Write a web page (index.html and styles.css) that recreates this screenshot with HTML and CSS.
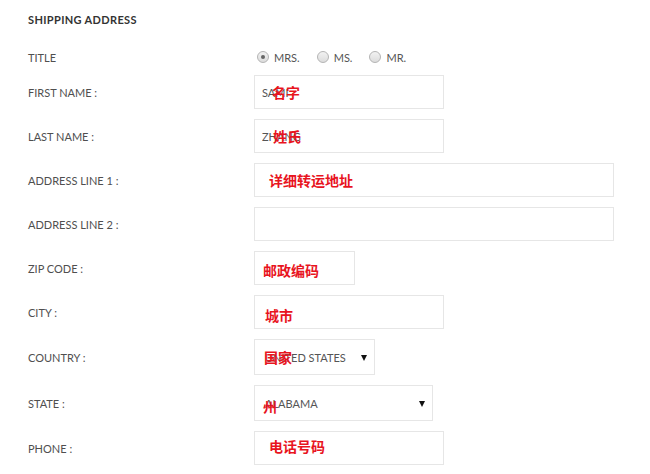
FILE: index.html
```html
<!DOCTYPE html>
<html lang="en">

<head>
  <meta charset="UTF-8">
  <title>Shipping Address</title>
  <link rel="stylesheet" href="styles.css">
</head>

<body>
  <form class="address">
    <h2>Shipping Address</h2>

    <div class="row row-title">
      <span class="label">Title</span>
      <div class="radios">
        <label><input type="radio" name="title" checked> Mrs.</label>
        <label><input type="radio" name="title"> Ms.</label>
        <label><input type="radio" name="title"> Mr.</label>
      </div>
    </div>

    <div class="row">
      <label class="label" for="first">First name :</label>
      <div class="field">
        <input class="box w-md" id="first" value="SAMI">
        <span class="note" style="left: 18px">名字</span>
      </div>
    </div>

    <div class="row">
      <label class="label" for="last">Last name :</label>
      <div class="field">
        <input class="box w-md" id="last" value="ZHANG">
        <span class="note" style="left: 19px">姓氏</span>
      </div>
    </div>

    <div class="row">
      <label class="label" for="addr1">Address line 1 :</label>
      <div class="field">
        <input class="box w-lg" id="addr1">
        <span class="note" style="left: 15px">详细转运地址</span>
      </div>
    </div>

    <div class="row">
      <label class="label" for="addr2">Address line 2 :</label>
      <div class="field">
        <input class="box w-lg" id="addr2">
      </div>
    </div>

    <div class="row">
      <label class="label" for="zip">Zip code :</label>
      <div class="field">
        <input class="box w-sm" id="zip">
        <span class="note" style="left: 9px; top: 19px">邮政编码</span>
      </div>
    </div>

    <div class="row">
      <label class="label" for="city">City :</label>
      <div class="field">
        <input class="box w-md" id="city">
        <span class="note" style="left: 11px; top: 20px">城市</span>
      </div>
    </div>

    <div class="row">
      <label class="label" for="country">Country :</label>
      <div class="field select-wrap w-country">
        <select class="box" id="country">
          <option>UNITED STATES</option>
        </select>
        <span class="note" style="left: 10px; top: 18px">国家</span>
      </div>
    </div>

    <div class="row">
      <label class="label" for="state">State :</label>
      <div class="field select-wrap w-state">
        <select class="box" id="state">
          <option>ALABAMA</option>
        </select>
        <span class="note" style="left: 9px; top: 21px">州</span>
      </div>
    </div>

    <div class="row">
      <label class="label" for="phone">Phone :</label>
      <div class="field">
        <input class="box w-md" id="phone">
        <span class="note" style="left: 15px; top: 15px">电话号码</span>
      </div>
    </div>
  </form>
</body>

</html>
```

FILE: styles.css
```css
body {
  margin: 0;
  background: #fff;
  font-family: Lato, "Liberation Sans", sans-serif;
  font-size: 11px;
  color: #4f4f4f;
}

.address {
  padding-left: 28px;
}

h2 {
  margin: 0;
  padding-top: 10px;
  line-height: 20px;
  margin-bottom: 17px;
  font-size: 11px;
  font-weight: 700;
  color: #333;
  text-transform: uppercase;
  letter-spacing: 0.35px;
}

.row {
  display: flex;
  align-items: center;
  margin-bottom: 10px;
}

.row-title {
  height: 20px;
  margin-bottom: 8px;
}

.label {
  width: 226px;
  flex: none;
  text-transform: uppercase;
}

.radios {
  display: flex;
  gap: 14px;
  color: #555;
  text-transform: uppercase;
}

.radios label {
  display: flex;
  align-items: center;
  gap: 5px;
}

.radios input {
  appearance: none;
  margin: 0 0 0 3px;
  width: 12px;
  height: 12px;
  border-radius: 50%;
  border: 1px solid #b4b4b4;
  background: linear-gradient(#f2f2f2, #dcdcdc);
  display: grid;
  place-items: center;
}

.radios input:checked::after {
  content: '';
  width: 4px;
  height: 4px;
  border-radius: 50%;
  background: #666;
}

.field {
  position: relative;
}

.box {
  box-sizing: border-box;
  display: block;
  height: 34px;
  border: 1px solid #e6e6e6;
  background: #fff;
  padding: 0 7px;
  font-family: inherit;
  font-size: 11px;
  color: #555;
  outline: none;
}

.w-sm { width: 101px; }
.w-md { width: 190px; }
.w-lg { width: 360px; }

.select-wrap .box {
  appearance: none;
  height: 36px;
  width: 100%;
  padding-left: 10px;
}

.w-country { width: 121px; }
.w-state { width: 179px; }

.select-wrap::after {
  content: '';
  position: absolute;
  right: 8px;
  top: 16px;
  border-left: 3.5px solid transparent;
  border-right: 3.5px solid transparent;
  border-top: 6px solid #111;
  pointer-events: none;
}

.note {
  position: absolute;
  top: 17px;
  transform: translateY(-50%);
  font-family: "Noto Sans CJK SC", sans-serif;
  font-weight: 700;
  font-size: 14px;
  line-height: 1;
  color: #e8141e;
  pointer-events: none;
}
```
